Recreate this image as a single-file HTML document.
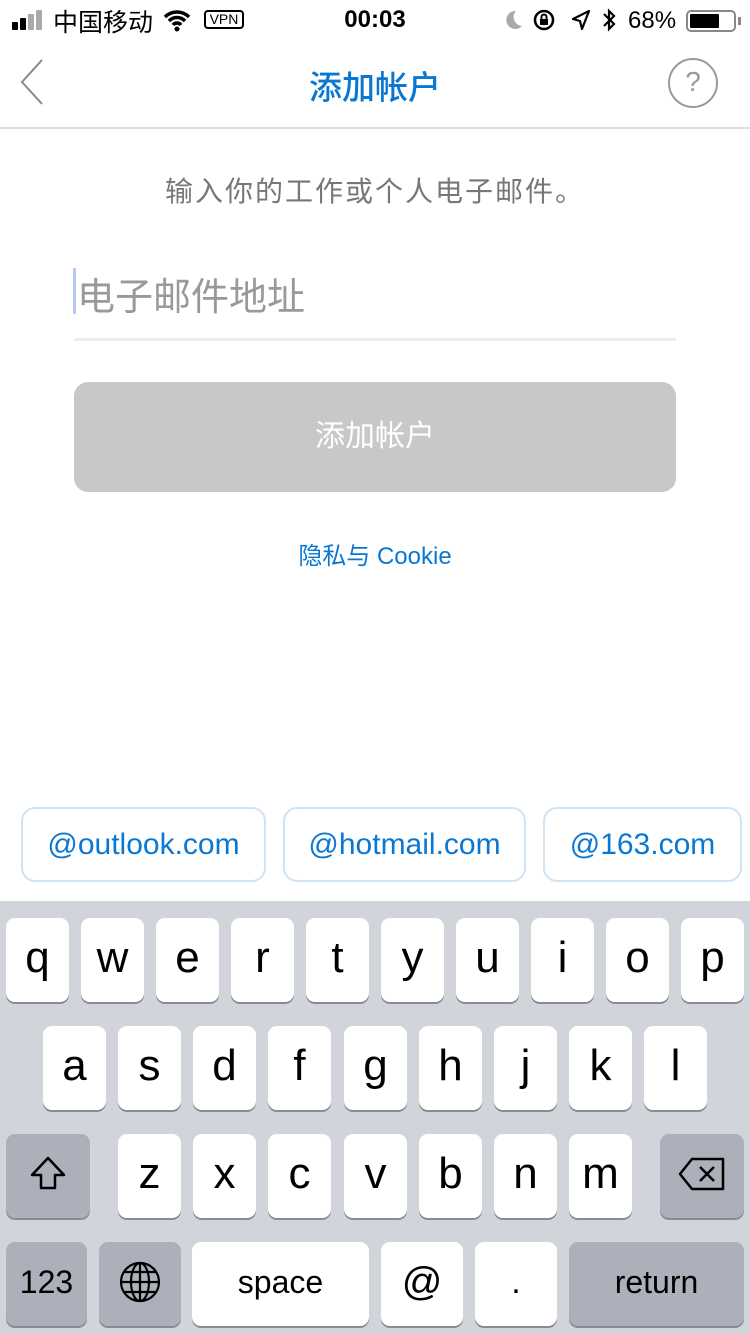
<!DOCTYPE html>
<html><head><meta charset="utf-8"><style>
*{margin:0;padding:0;box-sizing:border-box}
body{width:750px;height:1334px;overflow:hidden;background:#fff;font-family:"Liberation Sans","Noto Sans CJK SC",sans-serif;position:relative}
.a{position:absolute}
.k{position:absolute;background:#fff;border-radius:9px;box-shadow:0 2px 0 #888c92;display:flex;align-items:center;justify-content:center;font-size:44px;color:#000;height:84px;padding-bottom:4px}
.g{background:#abb0ba}
.chip{position:absolute;top:807px;height:75px;border:2px solid #cfe3f5;border-radius:14px;color:#0a78d2;font-size:30px;display:flex;align-items:center;justify-content:center}
</style></head><body>
<!-- status bar -->
<div class="a" style="left:12px;top:22px;width:6px;height:8px;background:#000;border-radius:1px"></div>
<div class="a" style="left:20px;top:18px;width:6px;height:12px;background:#000;border-radius:1px"></div>
<div class="a" style="left:28px;top:14px;width:6px;height:16px;background:#aaa;border-radius:1px"></div>
<div class="a" style="left:36px;top:10px;width:6px;height:20px;background:#aaa;border-radius:1px"></div>
<div class="a" style="left:53px;top:3px;font-size:25px;color:#000">中国移动</div>
<svg class="a" style="left:162px;top:8px" width="30" height="24" viewBox="0 0 30 24"><path d="M3 9a17 17 0 0 1 24 0M7 13a11 11 0 0 1 16 0M11 17a5 5 0 0 1 8 0" stroke="#000" stroke-width="3.5" fill="none"/><circle cx="15" cy="21" r="2.5"/></svg>
<div class="a" style="left:204px;top:10px;width:40px;height:19px;border:2px solid #000;border-radius:4px;font-size:14px;line-height:15px;text-align:center">VPN</div>
<div class="a" style="left:0;width:750px;top:6px;text-align:center;font-size:24px;font-weight:bold">00:03</div>
<svg class="a" style="left:502px;top:8px" width="22" height="24"><path d="M14 3a9 9 0 1 0 6 15a9 9 0 0 1-6-15z" fill="#aaa"/></svg>
<svg class="a" style="left:532px;top:7px" width="26" height="26"><circle cx="12" cy="13" r="9" stroke="#000" stroke-width="2.5" fill="none"/><rect x="8" y="12" width="8" height="6" fill="#000"/><path d="M9.5 12v-2a2.5 2.5 0 0 1 5 0v2" stroke="#000" stroke-width="2" fill="none"/></svg>
<svg class="a" style="left:570px;top:8px" width="22" height="24"><path d="M19 3L3 11l7 2 2 8z" stroke="#000" stroke-width="2.2" fill="none" stroke-linejoin="round"/></svg>
<svg class="a" style="left:600px;top:6px" width="18" height="28"><path d="M4 8l10 10-5 5V5l5 5L4 20" stroke="#000" stroke-width="2.2" fill="none"/></svg>
<div class="a" style="left:628px;top:7px;font-size:24px">68%</div>
<div class="a" style="left:686px;top:10px;width:50px;height:22px;border:2px solid #888;border-radius:5px"><div style="margin:2px;width:29px;height:14px;background:#000;border-radius:1px"></div></div>
<div class="a" style="left:738px;top:17px;width:3px;height:8px;background:#888"></div>
<!-- nav -->
<svg class="a" style="left:18px;top:58px" width="28" height="48"><path d="M24 2L4 24l20 22" stroke="#888" stroke-width="2" fill="none"/></svg>
<div class="a" style="left:0;width:750px;top:61px;text-align:center;font-size:33px;color:#0a78d2;font-weight:500">添加帐户</div>
<div class="a" style="left:668px;top:58px;width:50px;height:50px;border:2px solid #999;border-radius:50%;text-align:center;font-size:28px;line-height:44px;color:#999">?</div>
<div class="a" style="left:0;top:127px;width:750px;height:2px;background:#ddd"></div>
<!-- content -->
<div class="a" style="left:0;width:750px;top:170px;text-align:center;font-size:28px;letter-spacing:2px;color:#777">输入你的工作或个人电子邮件。</div>
<div class="a" style="left:73px;top:268px;width:3px;height:46px;background:#b8c6f5;border-radius:1px"></div>
<div class="a" style="left:77px;top:266px;font-size:38px;color:#999">电子邮件地址</div>
<div class="a" style="left:74px;top:338px;width:602px;height:3px;background:#ececec"></div>
<div class="a" style="left:74px;top:382px;width:602px;height:110px;background:#c8c8c8;border-radius:14px;color:#fff;font-size:30px;text-align:center;line-height:110px">添加帐户</div>
<div class="a" style="left:0;width:750px;top:536px;text-align:center;font-size:24px;color:#0a78d2">隐私与 Cookie</div>
<!-- chips -->
<div class="chip" style="left:21px;width:245px">@outlook.com</div>
<div class="chip" style="left:283px;width:243px">@hotmail.com</div>
<div class="chip" style="left:543px;width:199px">@163.com</div>
<!-- keyboard -->
<div class="a" style="left:0;top:901px;width:750px;height:433px;background:#d1d5db"></div>
<div class="k" style="left:6px;top:918px;width:63px">q</div>
<div class="k" style="left:81px;top:918px;width:63px">w</div>
<div class="k" style="left:156px;top:918px;width:63px">e</div>
<div class="k" style="left:231px;top:918px;width:63px">r</div>
<div class="k" style="left:306px;top:918px;width:63px">t</div>
<div class="k" style="left:381px;top:918px;width:63px">y</div>
<div class="k" style="left:456px;top:918px;width:63px">u</div>
<div class="k" style="left:531px;top:918px;width:63px">i</div>
<div class="k" style="left:606px;top:918px;width:63px">o</div>
<div class="k" style="left:681px;top:918px;width:63px">p</div>
<div class="k" style="left:43px;top:1026px;width:63px">a</div>
<div class="k" style="left:118px;top:1026px;width:63px">s</div>
<div class="k" style="left:193px;top:1026px;width:63px">d</div>
<div class="k" style="left:268px;top:1026px;width:63px">f</div>
<div class="k" style="left:344px;top:1026px;width:63px">g</div>
<div class="k" style="left:419px;top:1026px;width:63px">h</div>
<div class="k" style="left:494px;top:1026px;width:63px">j</div>
<div class="k" style="left:569px;top:1026px;width:63px">k</div>
<div class="k" style="left:644px;top:1026px;width:63px">l</div>
<div class="k g" style="left:6px;top:1134px;width:84px"><svg width="40" height="40"><path d="M20 4L4 21h9v13h14V21h9z" stroke="#000" stroke-width="2.5" fill="none" stroke-linejoin="round"/></svg></div>
<div class="k" style="left:118px;top:1134px;width:63px">z</div>
<div class="k" style="left:193px;top:1134px;width:63px">x</div>
<div class="k" style="left:268px;top:1134px;width:63px">c</div>
<div class="k" style="left:344px;top:1134px;width:63px">v</div>
<div class="k" style="left:419px;top:1134px;width:63px">b</div>
<div class="k" style="left:494px;top:1134px;width:63px">n</div>
<div class="k" style="left:569px;top:1134px;width:63px">m</div>
<div class="k g" style="left:660px;top:1134px;width:84px"><svg width="50" height="36"><path d="M15 3h31v30H15L3 18z" stroke="#000" stroke-width="2.5" fill="none" stroke-linejoin="round"/><path d="M23 11l14 14M37 11L23 25" stroke="#000" stroke-width="2.5"/></svg></div>
<div class="k g" style="left:6px;top:1242px;width:81px;font-size:32px">123</div>
<div class="k g" style="left:99px;top:1242px;width:82px"><svg width="44" height="44" viewBox="0 0 44 44"><g stroke="#000" stroke-width="2.2" fill="none"><circle cx="22" cy="22" r="19"/><ellipse cx="22" cy="22" rx="9" ry="19"/><path d="M22 3v38M3 22h38M6 12h32M6 32h32"/></g></svg></div>
<div class="k" style="left:192px;top:1242px;width:177px;font-size:32px">space</div>
<div class="k" style="left:381px;top:1242px;width:82px;font-size:40px">@</div>
<div class="k" style="left:475px;top:1242px;width:82px;font-size:34px">.</div>
<div class="k g" style="left:569px;top:1242px;width:175px;font-size:32px">return</div>
</body></html>
